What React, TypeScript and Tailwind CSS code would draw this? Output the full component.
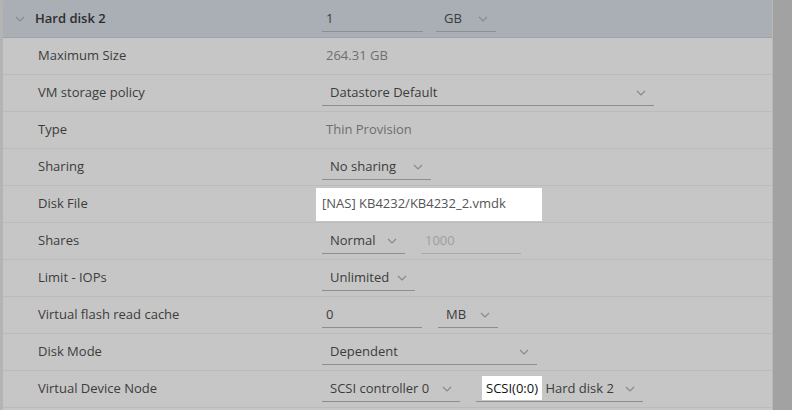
import React from "react";

const Chev = () => (
  <svg width="10" height="6" viewBox="0 0 10 6" className="shrink-0">
    <path d="M1 1l4 4 4-4" fill="none" stroke="#8a8a8a" strokeWidth="1.2" />
  </svg>
);

const Select = ({ text, w }: { text: string; w: string }) => (
  <div className={`flex items-center justify-between h-[26px] border-b border-[#8e8e8e] px-2 ${w}`}>
    <span>{text}</span>
    <Chev />
  </div>
);

const Input = ({ text, w, muted }: { text: string; w: string; muted?: boolean }) => (
  <div className={`flex items-center h-[26px] border-b px-1 ${w} ${muted ? "text-[#9e9e9e] border-[#aaaaaa]" : "border-[#8e8e8e]"}`}>
    {text}
  </div>
);

const Row = ({ label, children }: { label: string; children: React.ReactNode }) => (
  <div className="flex items-center h-[37px] border-b border-[#bbbbbb]">
    <div className="w-[319px] pl-[35px] shrink-0">{label}</div>
    <div className="flex items-center gap-4">{children}</div>
  </div>
);

export default function App() {
  return (
    <div
      className="w-[792px] h-[410px] overflow-hidden bg-[#c6c6c6] flex text-[13px] text-[#3c3c3c]"
      style={{ fontFamily: "'Open Sans', Lato, sans-serif" }}
    >
      <div className="flex-1 border-l-[3px] border-[#b4b4b4] border-t border-t-[#b0b0b0]">
        <div className="flex items-center h-[37px] bg-[#a9afb4] border-b border-[#9da3a8]">
          <div className="w-[319px] flex items-center gap-[10px] pl-[12px] shrink-0 font-semibold text-[#2e2e2e]">
            <Chev />
            Hard disk 2
          </div>
          <div className="flex items-center gap-[13px]">
            <Input text="1" w="w-[101px]" />
            <Select text="GB" w="w-[60px]" />
          </div>
        </div>
        <Row label="Maximum Size">
          <span className="text-[#6e6e6e] pl-1">264.31 GB</span>
        </Row>
        <Row label="VM storage policy">
          <Select text="Datastore Default" w="w-[332px]" />
        </Row>
        <Row label="Type">
          <span className="text-[#6e6e6e] pl-1">Thin Provision</span>
        </Row>
        <Row label="Sharing">
          <Select text="No sharing" w="w-[109px]" />
        </Row>
        <Row label="Disk File">
          <div className="bg-white h-[33px] w-[226px] -ml-[6px] flex items-center pl-[6px] text-[#555]">
            [NAS] KB4232/KB4232_2.vmdk
          </div>
        </Row>
        <Row label="Shares">
          <Select text="Normal" w="w-[83px]" />
          <Input text="1000" w="w-[100px]" muted />
        </Row>
        <Row label="Limit - IOPs">
          <Select text="Unlimited" w="w-[93px]" />
        </Row>
        <Row label="Virtual flash read cache">
          <Input text="0" w="w-[100px]" />
          <Select text="MB" w="w-[60px]" />
        </Row>
        <Row label="Disk Mode">
          <Select text="Dependent" w="w-[215px]" />
        </Row>
        <Row label="Virtual Device Node">
          <Select text="SCSI controller 0" w="w-[138px]" />
          <div className="flex items-center justify-between h-[26px] border-b border-[#8e8e8e] w-[167px] pr-2">
            <span>
              <span className="bg-white text-[#111] px-[4px] py-[3px] ml-[6px]">SCSI(0:0)</span> Hard disk 2
            </span>
            <Chev />
          </div>
        </Row>
      </div>
      <div className="w-[20px] bg-[#a2a2a2] border-l border-[#b8b8b8]" />
    </div>
  );
}
